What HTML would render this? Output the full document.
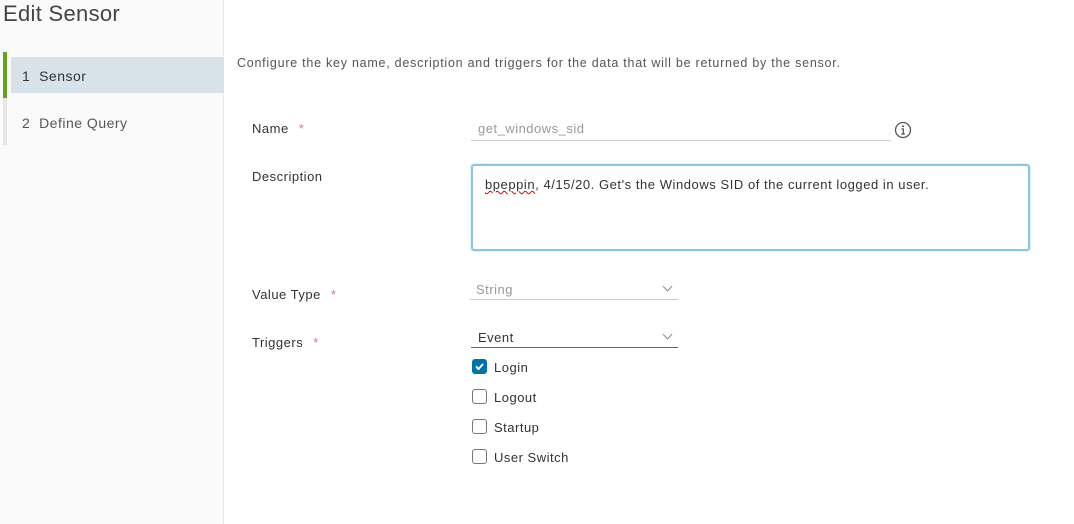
<!DOCTYPE html>
<html><head><style>
*{margin:0;padding:0;box-sizing:border-box}
body{width:1074px;height:524px;background:#fff;font-family:"Liberation Sans",sans-serif;color:#333;position:relative;overflow:hidden;font-size:13px;letter-spacing:.5px}
.a{position:absolute;white-space:nowrap}
.side{position:absolute;left:0;top:0;width:224px;height:524px;background:#fafafa;border-right:1px solid #e8e8e8}
.lbl{font-size:13px;color:#333}
.req{color:#c92100;opacity:.6;margin-left:10px}
.cb{position:absolute;width:15px;height:15px;border:1px solid #777;border-radius:3px;background:#fff}
.chev{position:absolute;width:7px;height:7px;border-right:1px solid #888;border-bottom:1px solid #888;transform:rotate(45deg)}
</style></head><body>
<div class="side"></div>
<div class="a" style="left:3px;top:1px;font-size:22px;color:#444;letter-spacing:.3px">Edit Sensor</div>
<div class="a" style="left:3px;top:52px;width:4px;height:93px;background:#e6e6e6"></div>
<div class="a" style="left:3px;top:52px;width:4px;height:46px;background:#62a420"></div>
<div class="a" style="left:11px;top:57px;width:213px;height:36px;background:#d8e3e9"></div>
<div class="a" style="left:22px;top:68px;font-size:14px;color:#333">1&nbsp; Sensor</div>
<div class="a" style="left:22px;top:115px;font-size:14px;color:#555">2&nbsp; Define Query</div>

<div class="a" style="left:237px;top:56px;font-size:12.5px;color:#555;letter-spacing:.75px">Configure the key name, description and triggers for the data that will be returned by the sensor.</div>

<div class="a lbl" style="left:252px;top:121px">Name<span class="req">*</span></div>
<div class="a lbl" style="left:252px;top:169px">Description</div>
<div class="a lbl" style="left:252px;top:287px">Value Type<span class="req">*</span></div>
<div class="a lbl" style="left:252px;top:335px">Triggers<span class="req">*</span></div>

<div class="a" style="left:478px;top:121px;color:#999">get_windows_sid</div>
<div class="a" style="left:471px;top:140px;width:420px;height:1px;background:#ccc"></div>
<svg class="a" style="left:894px;top:121px" width="18" height="18" viewBox="0 0 18 18"><circle cx="9" cy="9" r="7.5" fill="none" stroke="#555" stroke-width="1.3"/><circle cx="9" cy="5.3" r="1" fill="#555"/><path d="M7.3 8h2v5M7.3 13h3.6" fill="none" stroke="#555" stroke-width="1.3"/></svg>

<div class="a" style="left:471px;top:164px;width:559px;height:87px;border:2px solid #8cc6dc;border-radius:3px;box-shadow:0 0 2px #a9d6e6"></div>
<div class="a" style="left:485px;top:177px;color:#333;letter-spacing:.55px"><span style="text-decoration:underline wavy #d00;text-decoration-thickness:1px">bpeppin</span>, 4/15/20. Get's the Windows SID of the current logged in user.</div>

<div class="a" style="left:476px;top:282px;color:#999">String</div>
<div class="chev" style="left:664px;top:283px"></div>
<div class="a" style="left:470px;top:299px;width:208px;height:1px;background:#ccc"></div>

<div class="a" style="left:478px;top:330px;color:#333">Event</div>
<div class="chev" style="left:664px;top:331px"></div>
<div class="a" style="left:471px;top:347px;width:207px;height:1px;background:#666"></div>

<div class="cb" style="left:472px;top:359px;background:#0072a3;border-color:#0072a3"><svg width="13" height="13" viewBox="0 0 13 13" style="position:absolute;left:0;top:0"><path d="M3 6.5l2.5 2.5 4.5-5" fill="none" stroke="#fff" stroke-width="2"/></svg></div>
<div class="a" style="left:494px;top:360px">Login</div>
<div class="cb" style="left:472px;top:389px"></div>
<div class="a" style="left:494px;top:390px">Logout</div>
<div class="cb" style="left:472px;top:419px"></div>
<div class="a" style="left:494px;top:420px">Startup</div>
<div class="cb" style="left:472px;top:449px"></div>
<div class="a" style="left:494px;top:450px">User Switch</div>
</body></html>
